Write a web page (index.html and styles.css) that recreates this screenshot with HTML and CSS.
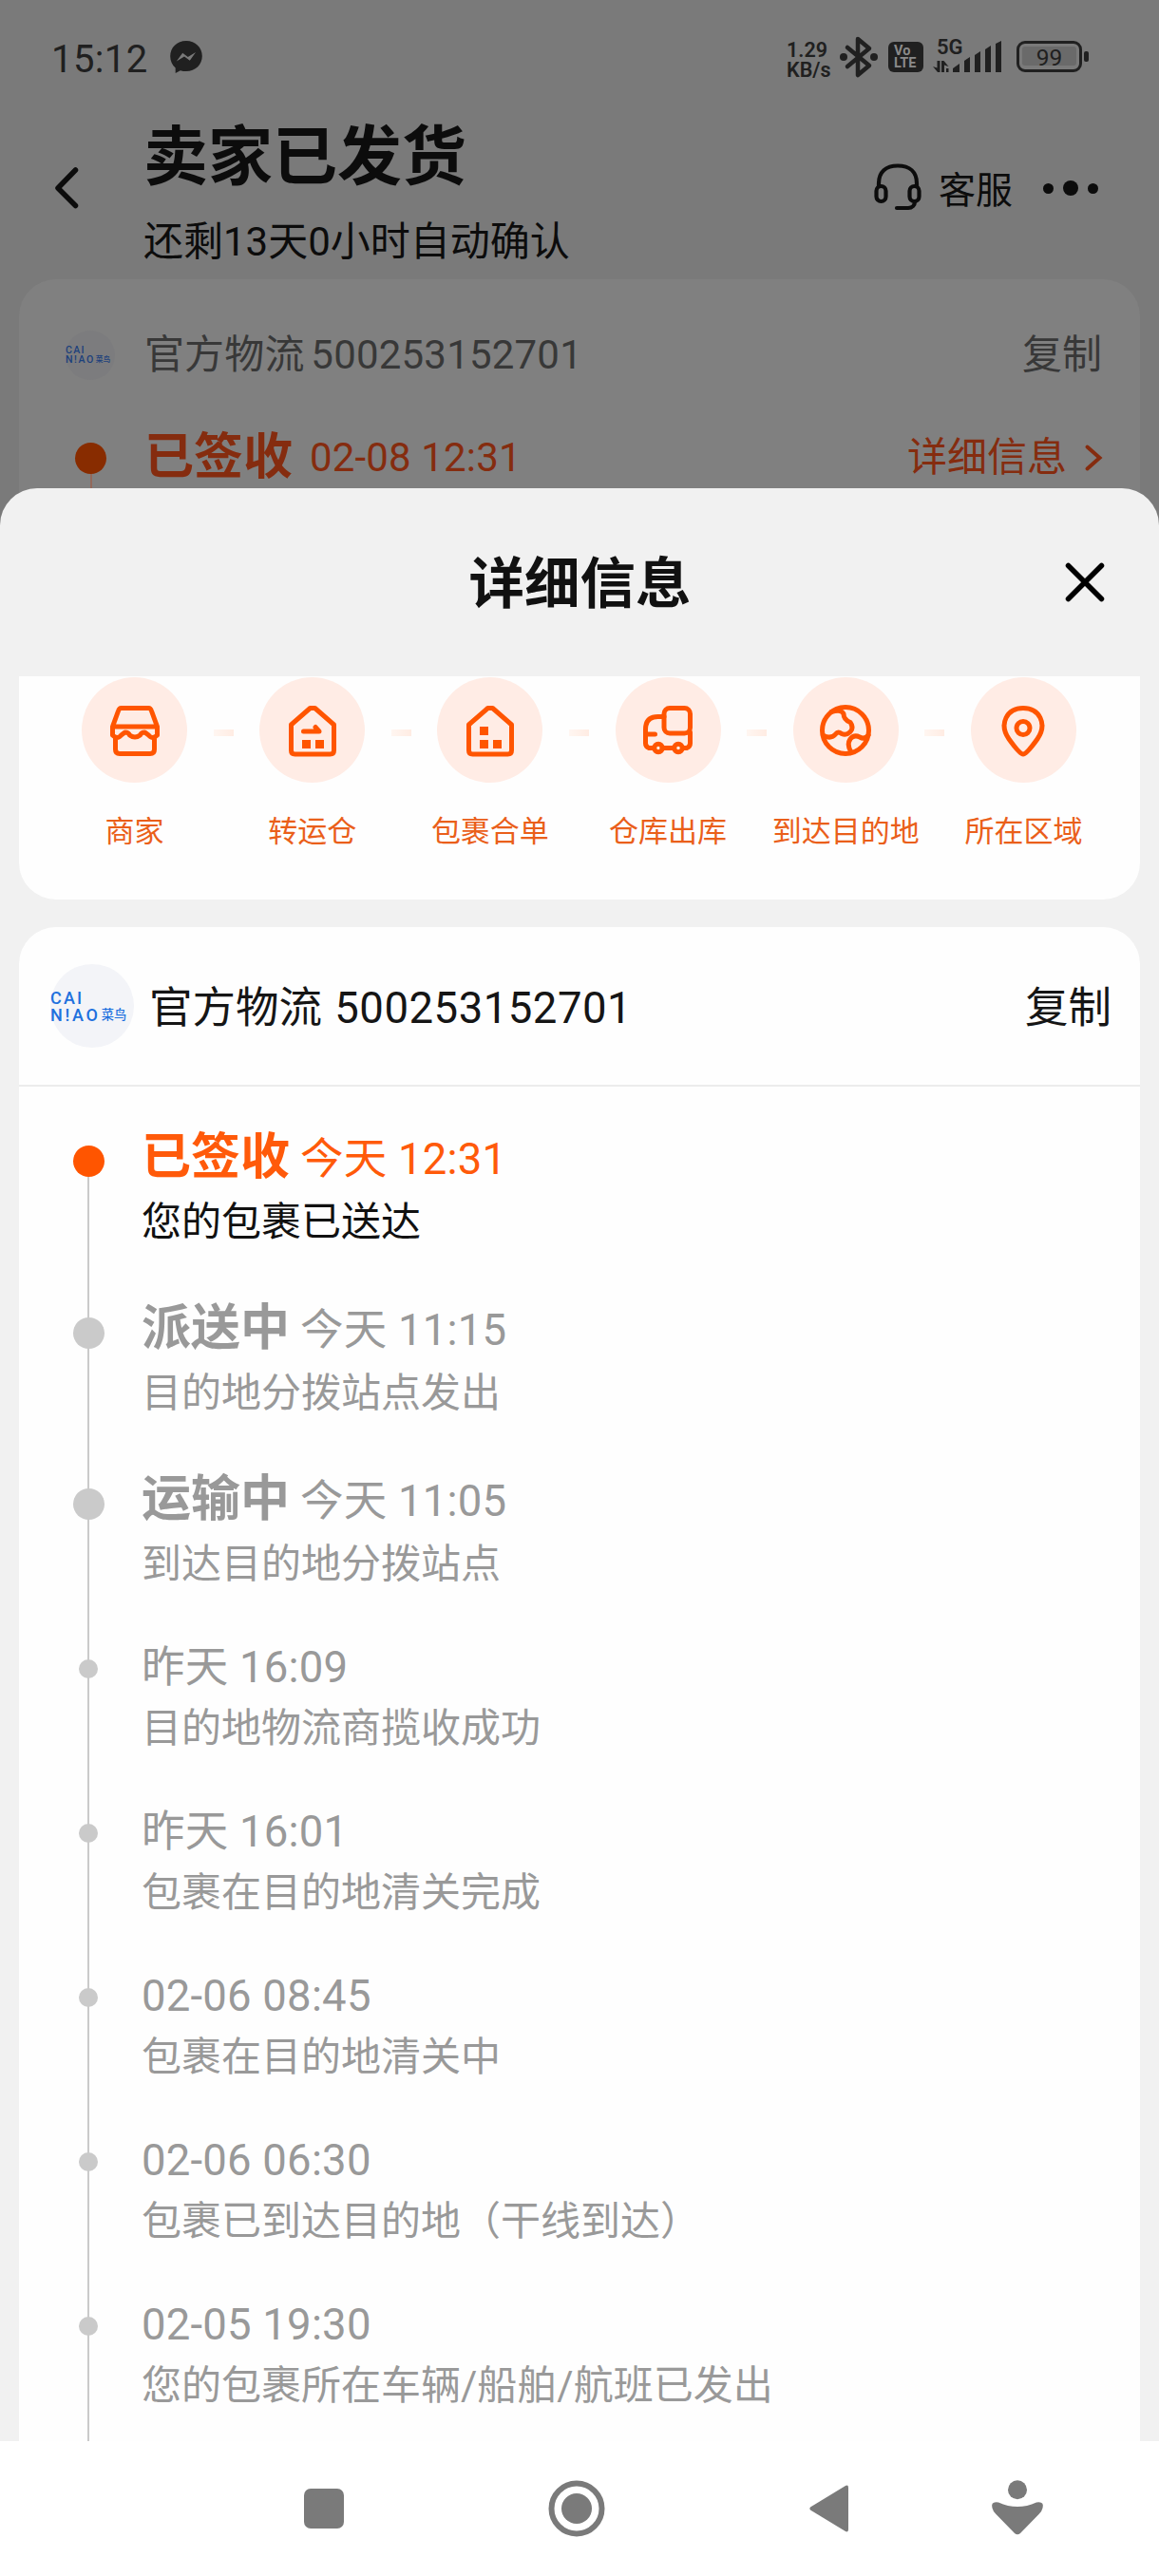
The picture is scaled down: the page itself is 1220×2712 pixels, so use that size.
FILE: index.html
```html
<!DOCTYPE html>
<html lang="zh-CN">
<head>
<meta charset="utf-8">
<title>详细信息</title>
<link rel="stylesheet" href="styles.css">
</head>
<body>
<div class="phone">
  <div class="page">
    <div class="status">
      <span class="clock">15:12</span>
      <svg class="messenger" width="34" height="34" viewBox="0 0 34 34"><path d="M17 0C7.300 0 .2 7 .2 16.300c0 5 2 9.200 5.500 12.200V34l5.200-2.800c1.900.6 4 .9 6.100.9 9.700 0 16.800-6.900 16.800-16S26.700 0 17 0Z"/><path class="bolt" d="M6.800 21.500 13.200 12.800 18.800 17 27 12 20.800 20.800 15 16.500Z"/></svg>
      <div class="indicators">
        <div class="speed"><span>1.29</span><span>KB/s</span></div>
        <svg class="bt" width="40" height="44" viewBox="0 0 40 44"><path d="M8 12 31 31 19 41V3L31 13 8 32"/><circle cx="4" cy="22" r="4"/><circle cx="36" cy="22" r="4"/></svg>
        <div class="volte"><span>Vo</span><span>LTE</span></div>
        <div class="signal">
          <svg width="74" height="38" viewBox="0 0 74 38"><path d="M4.500 24h3v12H5L0 30l4.500 1.500zM12 36H9V24h2.500l5 6-4.500-1.500zM14 32h2.500v4H14z"/><path d="M21 36v-4l7-5v9zM33 36V24l6-4v16zM44 36V18l6-4v22zM55 36V12l6-4v28zM66 36V6l6-3v33z"/></svg>
          <span class="net">5G</span>
        </div>
        <div class="battery"><div class="cell"><span>99</span></div><i></i></div>
      </div>
    </div>
    <div class="topbar">
      <svg class="back" width="24" height="44" viewBox="0 0 24 44"><path d="M21.500 3 3 22 21.500 40.500"/></svg>
      <div class="heading">
        <h1>卖家已发货</h1>
        <p>还剩13天0小时自动确认</p>
      </div>
      <svg class="headset" width="50" height="50" viewBox="0 0 50 50"><path d="M5 24v-3C5 9 12.500 2.500 25 2.500S45 9 45 21v3"/><rect x="2.500" y="24" width="10" height="16" rx="5"/><rect x="37.500" y="24" width="10" height="16" rx="5"/><path d="M43 40c0 4-3 7-7 7H24"/></svg>
      <span class="service">客服</span>
      <div class="more"><i></i><i class="mid"></i><i></i></div>
    </div>
    <div class="order">
      <div class="order-row carrier">
        <div class="logo logo-dim"><span>CAI</span><div><span>N!AO</span><small>菜鸟</small></div></div>
        <span class="num">官方物流 500253152701</span>
        <span class="right">复制</span>
      </div>
      <div class="order-row signed">
        <i class="dot"></i>
        <b>已签收</b><span class="when">02-08 12:31</span>
        <span class="right">详细信息</span>
        <svg class="chev" width="18" height="28" viewBox="0 0 18 28"><path d="M2.500 2.500 15.500 14 2.500 25.500"/></svg>
      </div>
      <i class="stem"></i>
    </div>
  </div>

  <section class="sheet">
    <header class="sheet-head">
      <h2>详细信息</h2>
      <svg class="close" width="42" height="42" viewBox="0 0 42 42"><path d="M3.500 3.500 38.500 38.500M38.500 3.500 3.500 38.500"/></svg>
    </header>
    <div class="steps">
      <div class="step"><div class="disc"><svg viewBox="0 0 56 56"><path d="M13.500 4.500h29q2 0 3 3L51.500 24H4.500L10.500 7.500q1-3 3-3ZM4.500 24v9q5 5 9 0l4-3q4 0 5 3 5.500 4 11 0 1-3 5-3l4 3q4 5 9 0v-9M7.500 36v12q0 4.500 4.500 4.500h32q4.500 0 4.500-4.500V36"/></svg></div><span>商家</span></div>
      <i class="dash"></i>
      <div class="step"><div class="disc"><svg viewBox="0 0 56 56"><path d="M25.500 4.500h5L50.500 22v27q0 4-4 4h-37q-4 0-4-4V22Z"/><path d="M18.500 29h16.500l-4-4.500"/><path class="solid" d="M17 38h9v9h-9zM31 38h9v9h-9z"/></svg></div><span>转运仓</span></div>
      <i class="dash"></i>
      <div class="step"><div class="disc"><svg viewBox="0 0 56 56"><path d="M25.500 4.500h5L50.500 22v27q0 4-4 4h-37q-4 0-4-4V22Z"/><path class="solid" d="M17 24h9v9h-9zM17 38h9v9h-9zM31 38h9v9h-9z"/></svg></div><span>包裹合单</span></div>
      <i class="dash"></i>
      <div class="step"><div class="disc"><svg viewBox="0 0 56 56"><path d="M12.500 46.500H8q-3.500-1.500-3.500-5V27q0-13.500 13-13.500H24M22 46.500h12M44 46.500h4q3.500-1.500 3.500-5V30M5 32h9.500"/><rect x="24" y="4.500" width="27.500" height="26.500" rx="6"/><circle cx="18" cy="46.500" r="4.300"/><circle cx="39" cy="46.500" r="4.300"/></svg></div><span>仓库出库</span></div>
      <i class="dash"></i>
      <div class="step"><div class="disc"><svg viewBox="0 0 56 56"><circle cx="28" cy="28" r="24.500"/><path d="M13 8.500q11-3 13 2 0 6 7 9 4 6 0 10-4 4-9 2-4-3-6 0-5 6-13 2M52 33q-4 5-9 2-6-3-10 2-4 6 1 14"/></svg></div><span>到达目的地</span></div>
      <i class="dash"></i>
      <div class="step"><div class="disc"><svg viewBox="0 0 56 56"><path d="M28 53q-3.500 0-15-16c-11-16-2-32.500 15-32.500S54 21 43 37Q31.500 53 28 53Z"/><circle cx="28" cy="25.500" r="7"/></svg></div><span>所在区域</span></div>
    </div>
    <div class="track">
      <div class="track-head">
        <div class="logo"><span>CAI</span><div><span>N!AO</span><small>菜鸟</small></div></div>
        <span class="name">官方物流 <span class="no">500253152701</span></span>
        <span class="copy">复制</span>
      </div>
      <ol class="events">
        <li class="event major now"><i class="rail"><i></i></i><div><h3><b>已签收</b><time>今天 12:31</time></h3><p>您的包裹已送达</p></div></li>
        <li class="event major"><i class="rail"><i></i></i><div><h3><b>派送中</b><time>今天 11:15</time></h3><p>目的地分拨站点发出</p></div></li>
        <li class="event major"><i class="rail"><i></i></i><div><h3><b>运输中</b><time>今天 11:05</time></h3><p>到达目的地分拨站点</p></div></li>
        <li class="event"><i class="rail"><i></i></i><div><h3><time>昨天 16:09</time></h3><p>目的地物流商揽收成功</p></div></li>
        <li class="event"><i class="rail"><i></i></i><div><h3><time>昨天 16:01</time></h3><p>包裹在目的地清关完成</p></div></li>
        <li class="event"><i class="rail"><i></i></i><div><h3><time>02-06 08:45</time></h3><p>包裹在目的地清关中</p></div></li>
        <li class="event"><i class="rail"><i></i></i><div><h3><time>02-06 06:30</time></h3><p>包裹已到达目的地（干线到达）</p></div></li>
        <li class="event"><i class="rail"><i></i></i><div><h3><time>02-05 19:30</time></h3><p>您的包裹所在车辆/船舶/航班已发出</p></div></li>
      </ol>
    </div>
  </section>

  <nav class="nav">
    <svg width="44" height="44" viewBox="0 0 44 44"><rect x="1" y="1" width="42" height="42" rx="7"/></svg>
    <svg width="60" height="60" viewBox="0 0 60 60"><circle class="ring" cx="30" cy="30" r="26.500"/><circle cx="30" cy="30" r="16"/></svg>
    <svg width="42" height="50" viewBox="0 0 42 50"><path d="M1 23.500 38 1q3-1.500 3 2v44q0 3.500-3 2L1 26.500q-1.500-1.500 0-3Z"/></svg>
    <svg width="54" height="58" viewBox="0 0 54 58"><circle cx="27" cy="10.300" r="10"/><path d="M7 23.500q20 9 40 0 8.500-1.500 6.500 6-1 4-4 6.500L30 56q-3 2.500-6 0L4.500 36Q1.500 33.500.5 29.500-1.500 22 7 23.500Z"/></svg>
  </nav>
</div>
</body>
</html>
```
FILE: styles.css
```css
* { box-sizing: border-box; margin: 0; padding: 0; }
body { font-family: Roboto, "Noto Sans CJK SC", sans-serif; background: #fff; }
i { font-style: normal; display: block; }
svg { display: block; flex: none; overflow: visible; }
span, b, time { white-space: pre; }

.phone { width: 1220px; height: 2712px; display: flex; flex-direction: column; overflow: hidden; background: #7a7a7a; }

/* dimmed page under the sheet */
.page { height: 550px; margin-bottom: -36px; flex: none; color: #0c0c0c; }
.status { height: 118px; display: flex; align-items: flex-start; padding: 0 74px 0 54px; color: #202020; }
.clock { font-size: 40px; letter-spacing: .4px; line-height: 60px; margin-top: 33px; width: 125px; }
.messenger { margin-top: 43px; fill: #202020; }
.bolt { fill: #7a7a7a; }
.indicators { margin-left: auto; display: flex; }
.speed { width: 46px; margin-top: 42px; display: flex; flex-direction: column; font-size: 21.500px; line-height: 21px; font-weight: 600; }
.bt { margin: 38px 0 0 10px; fill: #202020; }
.bt path { fill: none; stroke: #202020; stroke-width: 4.500; stroke-linejoin: round; stroke-linecap: round; }
.volte { width: 37px; height: 32px; margin: 44px 0 0 11px; padding: 3px 0 0 6px; border-radius: 6px; background: #202020; color: #8a8a8a; font-size: 14.500px; line-height: 13px; font-weight: 700; display: flex; flex-direction: column; }
.signal { display: grid; margin: 40px 0 0 10px; fill: #202020; }
.signal > * { grid-area: 1 / 1; }
.net { font-size: 22px; line-height: 20px; font-weight: 600; padding-left: 4px; }
.battery { display: flex; align-items: center; margin: 43px 0 0 14px; height: 33px; gap: 2px; }
.cell { width: 69px; height: 33px; border: 3.500px solid #202020; border-radius: 9px; padding: 3px; }
.cell span { display: block; height: 20px; border-radius: 3px; background: #6a6a6a; text-align: center; font-size: 24.500px; line-height: 23px; }
.battery i { width: 5px; height: 11px; border-radius: 2px; background: #202020; }
.topbar { height: 176px; display: flex; align-items: flex-start; padding: 0 64px 0 58px; }
.back { margin-top: 58px; fill: none; stroke: #0c0c0c; stroke-width: 5.500; stroke-linecap: round; stroke-linejoin: round; }
.heading { margin-left: 69px; }
.heading h1 { font-size: 68px; line-height: 90px; font-weight: 700; white-space: nowrap; margin-top: 3px; }
.heading p { font-size: 42px; line-height: 60px; margin-top: 14px; white-space: nowrap; }
.headset { margin: 54px 0 0 auto; fill: none; stroke: #0c0c0c; stroke-width: 4.200; stroke-linecap: round; }
.service { font-size: 39px; line-height: 60px; margin: 53px 0 0 18px; }
.more { display: flex; align-items: center; height: 16px; gap: 10px; margin: 72px 0 0 32px; }
.more i { width: 11px; height: 11px; border-radius: 50%; background: #0c0c0c; }
.more .mid { width: 16px; height: 16px; }
.order { height: 256px; margin: 0 20px; border-radius: 39px 39px 0 0; background: #808080; padding: 46px 40px 0; font-size: 42px; }
.order-row { display: flex; align-items: center; height: 68px; line-height: 68px; }
.order .right { margin-left: auto; }
.carrier { color: #383838; }
.carrier .num { margin-left: 31px; word-spacing: -4px; letter-spacing: .2px; }
.signed { margin-top: 40px; color: #852c0f; }
.signed .dot { width: 33px; height: 33px; border-radius: 50%; background: #882c00; margin-left: 19px; }
.signed b { font-size: 52px; font-weight: 700; margin-left: 40px; }
.signed .when { margin-left: 18px; letter-spacing: .15px; }
.chev { margin-left: 19px; fill: none; stroke: #852c0f; stroke-width: 4; stroke-linecap: round; }
.stem { width: 2px; height: 34px; margin: -18px 0 0 35px; background: #93695b; }

/* carrier logo, sized in em */
.logo { width: 4.4em; height: 4.4em; flex: none; border-radius: 50%; background: #f3f4f8; color: #2070de; font-size: 20px; line-height: .86em; padding-top: 1.37em; display: flex; flex-direction: column; }
.logo span { font-size: .9em; font-weight: 500; line-height: inherit; }
.logo > span { letter-spacing: .12em; height: .955em; }
.logo div { display: flex; height: .86em; }
.logo div span { letter-spacing: .15em; }
.logo small { font-size: .66em; line-height: 1.3; font-weight: 500; margin-left: .1em; white-space: nowrap; }
.logo-dim { font-size: 11.800px; margin-left: 9px; background: #7c7c7e; color: #1b407c; }

/* bottom sheet */
.sheet { height: 2056px; flex: none; background: #f1f1f1; border-radius: 39px 39px 0 0; overflow: hidden; display: flex; flex-direction: column; position: relative; }
.sheet-head { height: 198px; flex: none; display: grid; grid-template-columns: 1fr auto 1fr; align-items: center; padding: 0 57px 0 58px; }
.sheet-head h2 { grid-column: 2; font-size: 58.500px; font-weight: 700; color: #111; line-height: 80px; padding-top: 3px; }
.close { justify-self: end; stroke: #000; stroke-width: 5.500; stroke-linecap: round; }
.steps { height: 235px; flex: none; margin: 0 20px; background: #fefefe; border-radius: 0 0 39px 39px; display: flex; padding: 1px 41.500px 0; }
.step { width: 160px; display: flex; flex-direction: column; align-items: center; }
.disc { width: 111px; height: 111px; border-radius: 50%; background: #ffece5; display: grid; place-items: center; }
.disc svg { width: 56px; height: 56px; fill: none; stroke: #ff5500; stroke-width: 5; stroke-linejoin: round; stroke-linecap: round; }
.disc .solid { fill: #ff5500; stroke: none; }
.step span { font-size: 31px; line-height: 50px; margin-top: 27px; color: #ea5f1a; }
.dash { width: 21px; height: 7px; margin: 55px 3.100px 0; background: linear-gradient(90deg, #fff6f1, #ffece3); }
.track { flex: 1; min-height: 0; margin: 29px 20px 0; background: #fefefe; border-radius: 39px 39px 0 0; overflow: hidden; }
.track-head { height: 168px; border-bottom: 2px solid #ececec; display: flex; align-items: center; padding: 0 30px 0 33px; font-size: 45.500px; line-height: 60px; color: #151515; }
.track-head .name { margin: 5px 0 0 16px; }
.track-head .no { letter-spacing: .5px; margin-left: 2px; }
.track-head .copy { margin: 5px 0 0 auto; }
.events { list-style: none; padding: 44px 0 0 57px; }
.event { display: flex; height: 173px; color: #999; }
.rail { width: 33px; flex: none; background: linear-gradient(#cacaca, #cacaca) 15px 0 / 2px 100% no-repeat; display: flex; justify-content: center; align-items: flex-start; }
.rail i { width: 20px; height: 20px; border-radius: 50%; background: #cacaca; margin: 19px 1px 0 0; }
.event > div { padding-left: 39px; }
.event h3 { display: flex; align-items: baseline; height: 62px; font-weight: 400; font-size: 45.500px; line-height: 55px; letter-spacing: .2px; }
.event p { font-size: 42px; line-height: 60px; white-space: nowrap; }
.major { height: 180px; }
.major .rail i { width: 33px; height: 33px; margin: 18.500px 0 0; }
.major h3 { height: 69px; line-height: 61px; }
.major b { font-size: 52px; font-weight: 700; letter-spacing: 0; margin-right: 11px; }
.now h3 { color: #ff5a0a; }
.now p { color: #111; }
.now .rail { background-position: 15px 35px; }
.now .rail i { background: #ff5500; margin-top: 18px; }

/* system navigation */
.nav { height: 142px; flex: none; background: #fff; display: grid; grid-template-columns: 258px 275px 192px auto; padding: 41px 0 0 319px; fill: #7a7a7a; }
.nav svg:nth-child(1) { margin-top: 8px; }
.nav svg:nth-child(3) { margin-top: 5px; }
.ring { fill: none; stroke: #7a7a7a; stroke-width: 6; }
```
